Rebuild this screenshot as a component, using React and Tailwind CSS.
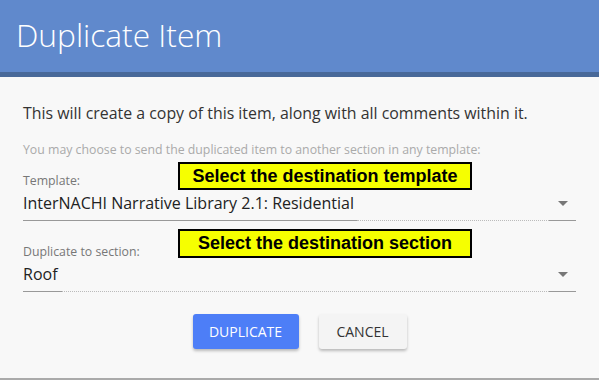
import { useState } from 'react';

const Caret = () => (
  <svg width="10" height="5" viewBox="0 0 10 5" className="shrink-0">
    <path d="M0 0h10L5 5z" fill="#777" />
  </svg>
);

const SelectField = ({ label, value, solidWidth }) => (
  <div className="flex flex-col">
    <span className="text-[12.3px] leading-[16px] text-[#777]">{label}</span>
    <div className="flex items-center justify-between h-[30px] mt-[1px] pr-[8px] pb-[4px]">
      <span className="text-[16px] text-[#222] leading-[22px]">{value}</span>
      <Caret />
    </div>
    <div className="flex h-[2px] items-start">
      <div className="h-[1px] bg-[#999]" style={{ width: solidWidth }} />
      <div className="flex-1 border-t border-dotted border-[#bbb]" />
      <div className="w-[27px] h-[1px] bg-[#999]" />
    </div>
  </div>
);

const Callout = ({ children, className }) => (
  <div
    className={`absolute left-[178px] w-[294px] bg-[#f6ff00] border-2 border-black flex items-center justify-center font-['Liberation_Sans',Arial,sans-serif] font-bold text-[18px] text-black ${className}`}
  >
    {children}
  </div>
);

export default function App() {
  const [section] = useState('Roof');

  return (
    <div className="w-[599px] h-[380px] bg-[#f8f8f8] font-['Open_Sans',sans-serif] relative overflow-hidden flex flex-col">
      <header className="h-[77px] shrink-0 bg-[#6089cc] border-b-[5px] border-[#496999] flex items-center px-[16px] pb-[2px]">
        <h1 className="text-[31.7px] font-light text-white">Duplicate Item</h1>
      </header>

      <div className="flex-1 flex flex-col px-[23px] pt-[25px] border-b-2 border-[#aaa]">
        <p className="text-[15.9px] text-[#333] leading-[22px]">
          This will create a copy of this item, along with all comments within it.
        </p>
        <p className="mt-[18px] text-[12.3px] text-[#aaa] leading-[16px]">
          You may choose to send the duplicated item to another section in any template:
        </p>

        <div className="mt-[15px]">
          <SelectField label="Template:" value="InterNACHI Narrative Library 2.1: Residential" solidWidth={334} />
        </div>
        <div className="mt-[22px]">
          <SelectField label="Duplicate to section:" value={section} solidWidth={39} />
        </div>

        <div className="flex justify-center gap-[20px] mt-[21px]">
          <button className="w-[106px] h-[35px] rounded-[3px] bg-[#4d7ef7] text-white text-[14px] shadow-[0_2px_3px_rgba(0,0,0,0.25)]">
            DUPLICATE
          </button>
          <button className="w-[88px] h-[35px] rounded-[3px] bg-[#f4f4f4] text-[#333] text-[14px] shadow-[0_2px_3px_rgba(0,0,0,0.25)]">
            CANCEL
          </button>
        </div>
      </div>

      <Callout className="top-[162px] h-[28px]">Select the destination template</Callout>
      <Callout className="top-[229px] h-[29px]">Select the destination section</Callout>
    </div>
  );
}
